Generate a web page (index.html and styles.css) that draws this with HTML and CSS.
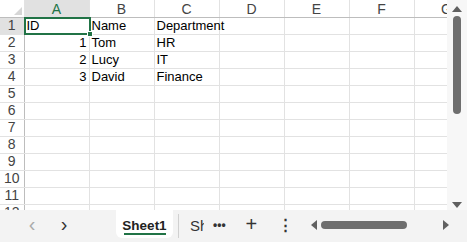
FILE: index.html
```html
<!DOCTYPE html>
<html lang="en">
<head>
    <meta charset="UTF-8">
    <title>Sheet1</title>
    <link rel="stylesheet" href="styles.css">
</head>
<body>
    <div class="workbook">
        <div class="main">
            <div class="grid-wrap">
                <table class="grid">
                    <colgroup>
                        <col class="c-row"><col class="c"><col class="c"><col class="c"><col class="c"><col class="c"><col class="c"><col class="c">
                    </colgroup>
                    <thead>
                        <tr>
                            <th class="corner"><span class="tri"></span></th>
                            <th class="col-head active">A</th>
                            <th class="col-head">B</th>
                            <th class="col-head">C</th>
                            <th class="col-head">D</th>
                            <th class="col-head">E</th>
                            <th class="col-head">F</th>
                            <th class="col-head">G</th>
                        </tr>
                    </thead>
                    <tbody id="rows">
                        <tr><th class="row-head active">1</th><td class="sel">ID<span class="selbox"><span class="handle"></span></span></td><td>Name</td><td>Department</td><td></td><td></td><td></td><td></td></tr>
                        <tr><th class="row-head">2</th><td class="num">1</td><td>Tom</td><td>HR</td><td></td><td></td><td></td><td></td></tr>
                        <tr><th class="row-head">3</th><td class="num">2</td><td>Lucy</td><td>IT</td><td></td><td></td><td></td><td></td></tr>
                        <tr><th class="row-head">4</th><td class="num">3</td><td>David</td><td>Finance</td><td></td><td></td><td></td><td></td></tr>
                    </tbody>
                </table>
            </div>
            <div class="vscroll">
                <span class="arrow up"></span>
                <span class="vthumb"></span>
                <span class="arrow down"></span>
            </div>
        </div>
        <div class="tabbar">
            <span class="nav">&#x2039;</span>
            <span class="nav dark">&#x203A;</span>
            <span class="tab">Sheet1</span>
            <span class="tab-sep"></span>
            <span class="tab-cut">Sh</span>
            <span class="more">&bull;&bull;&bull;</span>
            <span class="plus">+</span>
            <span class="kebab">&#x22EE;</span>
            <div class="hscroll">
                <span class="arrow left"></span>
                <span class="hthumb"></span>
                <span class="arrow right"></span>
            </div>
        </div>
    </div>
    <script>
        // fill the empty rows 5..12
        const body = document.getElementById('rows');
        for (let i = 5; i <= 12; i++) {
            const tr = document.createElement('tr');
            tr.innerHTML = '<th class="row-head">' + i + '</th>' + '<td></td>'.repeat(7);
            body.appendChild(tr);
        }
    </script>
</body>
</html>
```

FILE: styles.css
```css
* {
    box-sizing: border-box;
}
body {
    margin: 0;
    font-family: "Liberation Sans", Arial, sans-serif;
    background: #fff;
}
.workbook {
    width: 467px;
    height: 242px;
    display: flex;
    flex-direction: column;
    overflow: hidden;
}
.main {
    display: flex;
    height: 210px;
}
.grid-wrap {
    width: 447px;
    height: 210px;
    overflow: hidden;
}
.grid {
    border-collapse: collapse;
    table-layout: fixed;
    width: 479px;
}
.c-row {
    width: 24px;
}
.c {
    width: 65px;
}
.grid th, .grid td {
    height: 17px;
    padding: 0 2px;
    border: 1px solid #e2e2e2;
    font-size: 13px;
    line-height: 15px;
    white-space: nowrap;
    overflow: visible;
    font-weight: normal;
}
.grid td {
    color: #000;
    text-align: left;
}
.grid td.num {
    text-align: right;
}
.grid thead th {
    height: 17px;
    padding-top: 1px;
    border-top: none;
    border-bottom: 1px solid #bdbdbd;
    color: #444;
    font-size: 14px;
    text-align: center;
    line-height: 14px;
}
.corner {
    position: relative;
    border-left: none !important;
}
.tri {
    position: absolute;
    right: 2px;
    bottom: 2px;
    width: 0;
    height: 0;
    border-left: 8px solid transparent;
    border-bottom: 8px solid #d6d6d6;
}
.col-head.active {
    background: #e1e1e1;
    color: #217346 !important;
    border-bottom: 1px solid #217346 !important;
}
.row-head {
    color: #444;
    font-size: 14px !important;
    text-align: center;
    border-left: none !important;
    border-right: 1px solid #bdbdbd !important;
}
.row-head.active {
    background: #e1e1e1;
}
.sel {
    position: relative;
}
.selbox {
    position: absolute;
    left: -1px;
    top: -1px;
    right: -2px;
    bottom: -1px;
    border: 2px solid #217346;
}
.handle {
    position: absolute;
    right: -4px;
    bottom: -4px;
    width: 6px;
    height: 6px;
    background: #217346;
    border: 1px solid #fff;
}
.vscroll {
    width: 20px;
    height: 210px;
    background: #f7f7f7;
    display: flex;
    flex-direction: column;
    align-items: center;
    padding-top: 6px;
}
.arrow {
    width: 0;
    height: 0;
}
.arrow.up {
    border-left: 5px solid transparent;
    border-right: 5px solid transparent;
    border-bottom: 6px solid #606060;
}
.arrow.down {
    margin-top: auto;
    margin-bottom: 2px;
    border-left: 5px solid transparent;
    border-right: 5px solid transparent;
    border-top: 6px solid #606060;
}
.vthumb {
    margin-top: 4px;
    width: 8px;
    height: 98px;
    border-radius: 4px;
    background: #6e6e6e;
}
.tabbar {
    height: 32px;
    background: #f3f3f3;
    display: flex;
    align-items: center;
    font-size: 14px;
    color: #333;
}
.nav {
    font-size: 20px;
    color: #aaa;
    width: 32px;
    text-align: center;
    margin-top: -4px;
}
.nav:first-child {
    margin-left: 16px;
}
.nav.dark {
    color: #333;
}
.tab {
    margin-left: 36px;
    align-self: stretch;
    width: 57px;
    margin-bottom: 4px;
    background: #fff;
    border-radius: 0 0 6px 6px;
    font-weight: bold;
    font-size: 13.5px;
    color: #222;
    padding-top: 8px;
    text-align: center;
    position: relative;
}
.tab::after {
    content: "";
    position: absolute;
    left: 8px;
    right: 7px;
    bottom: 3px;
    height: 2px;
    background: #217346;
}
.tab-sep {
    width: 1px;
    height: 24px;
    background: #d0d0d0;
    margin-left: 5px;
}
.tab-cut {
    margin-left: 11px;
    width: 14px;
    overflow: hidden;
    color: #333;
    font-size: 15px;
    margin-top: -1px;
}
.more {
    margin-left: 9px;
    font-size: 12px;
    font-weight: bold;
    color: #333;
    margin-top: -2px;
}
.plus {
    margin-left: 20px;
    font-size: 20px;
    font-weight: 300;
    color: #333;
    margin-top: -4px;
}
.kebab {
    margin-left: 21px;
    font-size: 15px;
    font-weight: bold;
    color: #333;
    margin-top: -2px;
}
.hscroll {
    margin-left: 18px;
    width: 140px;
    display: flex;
    align-items: center;
    margin-top: -2px;
}
.arrow.left {
    border-top: 5px solid transparent;
    border-bottom: 5px solid transparent;
    border-right: 6px solid #606060;
}
.hthumb {
    margin-left: 4px;
    width: 86px;
    height: 8px;
    border-radius: 4px;
    background: #6e6e6e;
}
.arrow.right {
    margin-left: auto;
    margin-right: 2px;
    border-top: 5px solid transparent;
    border-bottom: 5px solid transparent;
    border-left: 6px solid #606060;
}
```
